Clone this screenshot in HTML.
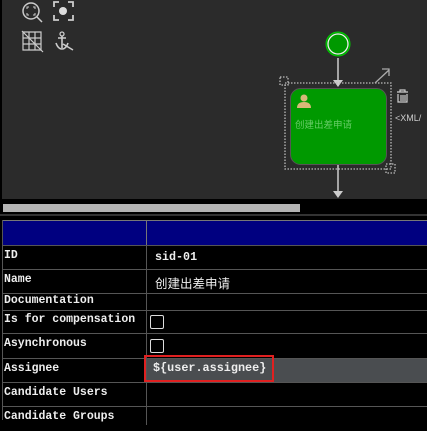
<!DOCTYPE html><html><head><style>
body{margin:0;width:427px;height:416px;background:#000;overflow:hidden;position:relative;font-family:"Liberation Mono","Noto Sans CJK SC",monospace}
.cv{position:absolute;left:2px;top:0;width:425px;height:199px;background:#2b2b2b}
.row{position:absolute;left:2px;width:425px;border-top:1px solid #555;color:#eee;font-weight:bold;font-size:11.5px}
.row .l{position:absolute;left:2px;top:3px}
.row .v{position:absolute;left:153px;top:4px;font-size:11.7px}
.div{position:absolute;left:146px;top:221px;width:1px;height:200px;background:#555}
.cb{position:absolute;left:150px;width:12px;height:12px;border:1px solid #ddd;border-radius:2px}
</style></head><body>
<div class="cv"></div>
<svg width="427" height="200" style="position:absolute;left:0;top:0" fill="none" stroke="#ccc">
<circle cx="31" cy="11" r="8" stroke-width="1.5"/><line x1="37" y1="17" x2="42" y2="22" stroke-width="1.5"/>
<path d="M27 9v-2h2M33 7h2v2M35 13v2h-2M29 15h-2v-2" stroke-width="1"/>
<path d="M54 7V2h5M68 2h5v5M73 15v5h-5M59 20h-5v-5" stroke-width="1.8"/><circle cx="63" cy="11" r="4" fill="#ddd" stroke="none"/>
<path d="M23 32h18v18h-18zM23 38h18M23 44h18M29 32v18M35 32v18" stroke-width="1.2"/><line x1="22" y1="31" x2="43" y2="52" stroke-width="1.2"/>
<circle cx="62" cy="34" r="2" stroke-width="1.3"/><path d="M62 36v12M56 43q2 6 6 6q4 0 6-6M58 38h8M63 44l10 6" stroke-width="1.6"/>
<circle cx="338" cy="44" r="12" fill="#009900" stroke="#0c0" stroke-width="1"/><circle cx="338" cy="44" r="10" stroke="#eee" stroke-width="1.3"/>
<line x1="338" y1="58" x2="338" y2="80" stroke="#ccc" stroke-width="1.5"/><path d="M333 80h10l-5 7z" fill="#ccc" stroke="none"/>
<rect x="285" y="83" width="106" height="86" stroke="#bbb" stroke-width="1.3" stroke-dasharray="1.5 1.5"/>
<rect x="280" y="77" width="8" height="8" stroke="#bbb" stroke-width="1.3" stroke-dasharray="1.5 1.5"/>
<rect x="386" y="164" width="9" height="9" stroke="#bbb" stroke-width="1.3" stroke-dasharray="1.5 1.5"/>
<rect x="290.5" y="88.5" width="96" height="76" rx="10" fill="#009900" stroke="#555"/>
<circle cx="304" cy="98" r="3.5" fill="#d8b878" stroke="none"/><path d="M297 108q0-6 7-6q7 0 7 6z" fill="#d8b878" stroke="none"/>
<line x1="338" y1="165" x2="338" y2="192" stroke-width="1.5"/><path d="M333 191h10l-5 7z" fill="#ccc" stroke="none"/>
<path d="M375 83l14-13M382 69h7v7" stroke="#aaa" stroke-width="1.3"/>
<path d="M397 92h11M400 92v-2h5v2M398 94v8h9v-8M401 95v6M403 95v6M405 95v6" stroke="#ccc" stroke-width="1.2"/>
<text x="295" y="128" fill="#6c6" stroke="none" font-size="9.5" font-family="Liberation Sans,Noto Sans CJK SC,sans-serif">创建出差申请</text>
<text x="395" y="121" fill="#ccc" stroke="none" font-size="9" font-family="Liberation Sans,sans-serif">&lt;XML/</text>
</svg>
<div style="position:absolute;left:3px;top:204px;width:297px;height:8px;background:#b4b4b4"></div>
<div style="position:absolute;left:0;top:214px;width:427px;height:2px;background:#333"></div>
<div style="position:absolute;left:2px;top:220px;width:425px;height:25px;background:#000080;border-top:1px solid #777"></div>
<div style="position:absolute;left:2px;top:220px;width:1px;height:200px;background:#555"></div>
<div class="div" style="background:#777;height:24px"></div>
<div class="div" style="top:245px;height:180px"></div>
<div class="row" style="top:245px;height:24px"><span class="l">ID</span><span class="v">sid-01</span></div>
<div class="row" style="top:269px;height:24px"><span class="l">Name</span><span class="v" style="font-weight:normal;font-family:'Noto Sans CJK SC',sans-serif;top:3px;font-size:12.5px">创建出差申请</span></div>
<div class="row" style="top:293px;height:17px"><span class="l" style="top:0">Documentation</span></div>
<div class="row" style="top:310px;height:23px"><span class="l" style="top:2px">Is for compensation</span></div>
<div class="cb" style="top:315px"></div>
<div class="row" style="top:333px;height:25px"><span class="l">Asynchronous</span></div>
<div class="cb" style="top:339px"></div>
<div class="row" style="top:358px;height:24px"><span class="l">Assignee</span></div>
<div style="position:absolute;left:147px;top:359px;width:280px;height:23px;background:#4a4d50"></div>
<div style="position:absolute;left:144px;top:355px;width:130px;height:27px;border:2px solid #e02020;box-sizing:border-box;z-index:5"></div>
<div style="position:absolute;left:153px;top:361px;color:#eee;font-weight:bold;font-size:11.8px;z-index:6">${user.assignee}</div>
<div class="row" style="top:382px;height:24px"><span class="l">Candidate Users</span></div>
<div class="row" style="top:406px;height:24px"><span class="l">Candidate Groups</span></div>
<div class="div" style="top:382px;height:40px"></div>
</body></html>
